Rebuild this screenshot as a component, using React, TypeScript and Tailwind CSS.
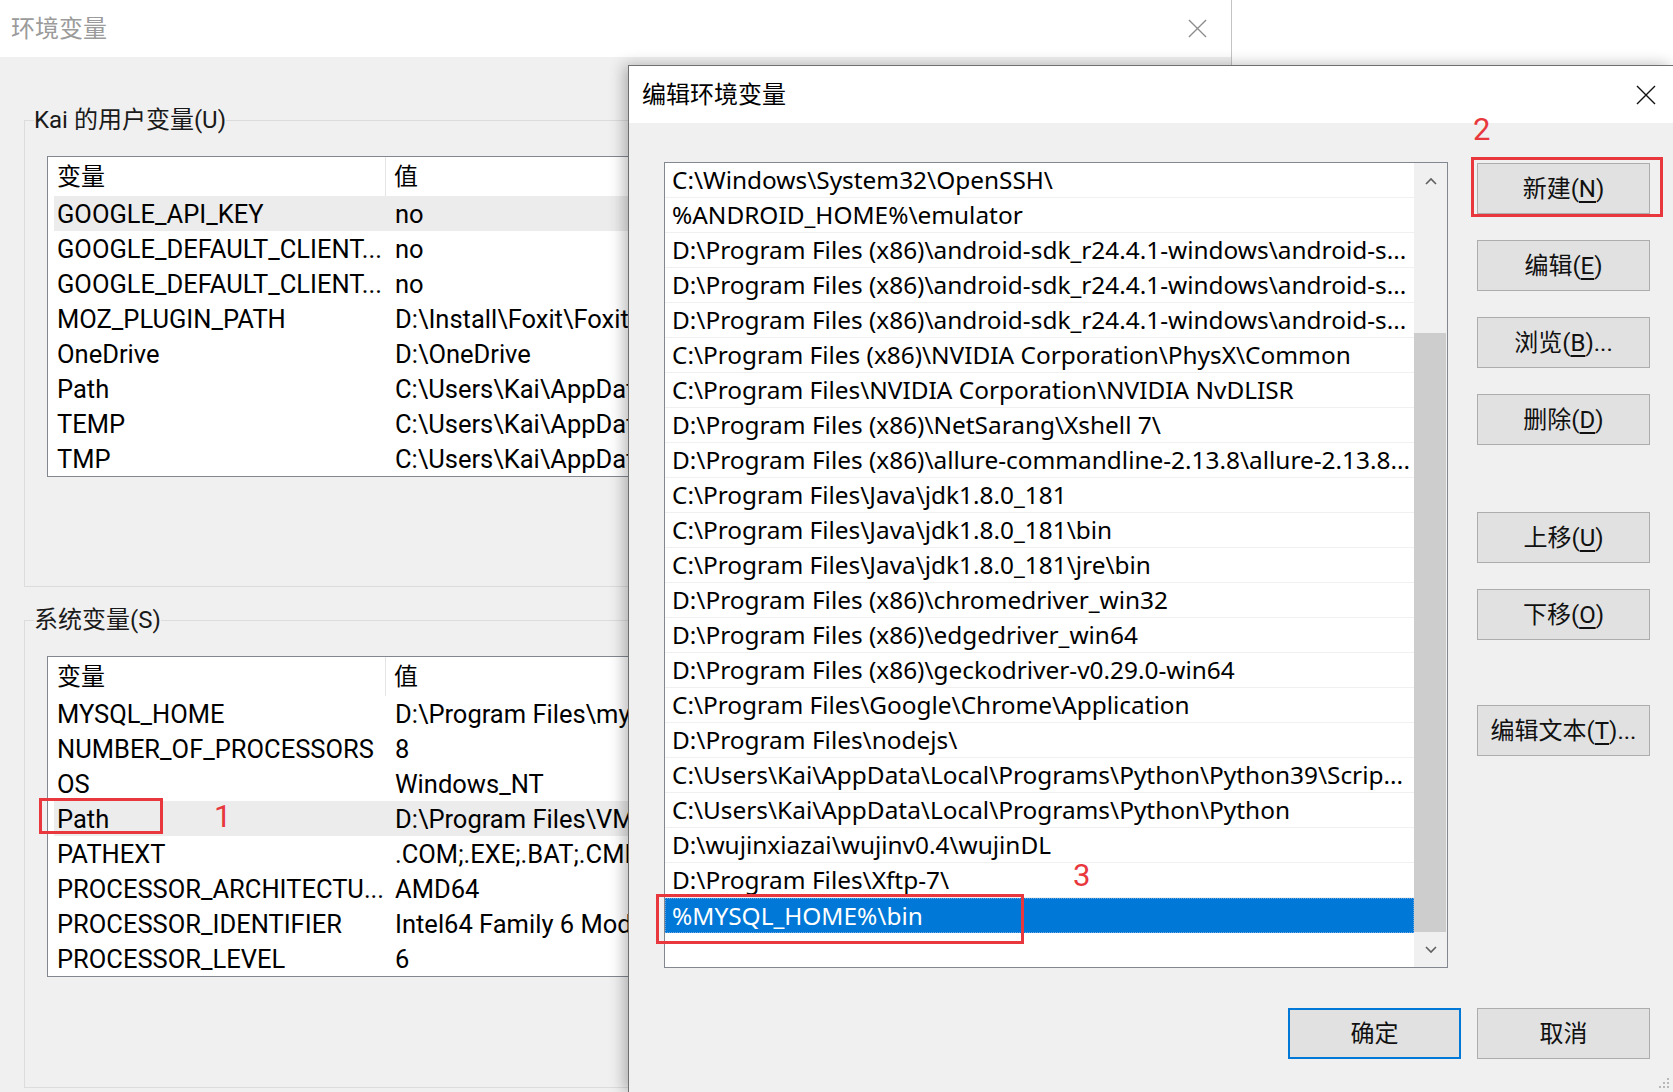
import React from 'react'

// 值列的右半部分被“编辑环境变量”对话框挡住
const userVars: [string, string][] = [
    ['GOOGLE_API_KEY', 'no'],
    ['GOOGLE_DEFAULT_CLIENT...', 'no'],
    ['GOOGLE_DEFAULT_CLIENT...', 'no'],
    ['MOZ_PLUGIN_PATH', 'D:\\Install\\Foxit\\Foxit R'],
    ['OneDrive', 'D:\\OneDrive'],
    ['Path', 'C:\\Users\\Kai\\AppData'],
    ['TEMP', 'C:\\Users\\Kai\\AppData'],
    ['TMP', 'C:\\Users\\Kai\\AppData'],
]

const sysVars: [string, string][] = [
    ['MYSQL_HOME', 'D:\\Program Files\\mys'],
    ['NUMBER_OF_PROCESSORS', '8'],
    ['OS', 'Windows_NT'],
    ['Path', 'D:\\Program Files\\VM'],
    ['PATHEXT', '.COM;.EXE;.BAT;.CMD'],
    ['PROCESSOR_ARCHITECTU...', 'AMD64'],
    ['PROCESSOR_IDENTIFIER', 'Intel64 Family 6 Mod'],
    ['PROCESSOR_LEVEL', '6'],
]

const paths = [
    'C:\\Windows\\System32\\OpenSSH\\',
    '%ANDROID_HOME%\\emulator',
    'D:\\Program Files (x86)\\android-sdk_r24.4.1-windows\\android-s...',
    'D:\\Program Files (x86)\\android-sdk_r24.4.1-windows\\android-s...',
    'D:\\Program Files (x86)\\android-sdk_r24.4.1-windows\\android-s...',
    'C:\\Program Files (x86)\\NVIDIA Corporation\\PhysX\\Common',
    'C:\\Program Files\\NVIDIA Corporation\\NVIDIA NvDLISR',
    'D:\\Program Files (x86)\\NetSarang\\Xshell 7\\',
    'D:\\Program Files (x86)\\allure-commandline-2.13.8\\allure-2.13.8...',
    'C:\\Program Files\\Java\\jdk1.8.0_181',
    'C:\\Program Files\\Java\\jdk1.8.0_181\\bin',
    'C:\\Program Files\\Java\\jdk1.8.0_181\\jre\\bin',
    'D:\\Program Files (x86)\\chromedriver_win32',
    'D:\\Program Files (x86)\\edgedriver_win64',
    'D:\\Program Files (x86)\\geckodriver-v0.29.0-win64',
    'C:\\Program Files\\Google\\Chrome\\Application',
    'D:\\Program Files\\nodejs\\',
    'C:\\Users\\Kai\\AppData\\Local\\Programs\\Python\\Python39\\Scrip...',
    'C:\\Users\\Kai\\AppData\\Local\\Programs\\Python\\Python',
    'D:\\wujinxiazai\\wujinv0.4\\wujinDL',
    'D:\\Program Files\\Xftp-7\\',
    '%MYSQL_HOME%\\bin',
]

function CloseIcon({ className }: { className: string }) {
    return (
        <svg viewBox="0 0 20 20" className={className} fill="none" stroke="currentColor" strokeWidth="1.4">
            <path d="M1 1 L19 19 M19 1 L1 19" />
        </svg>
    )
}

function VarTable({ rows, selected }: { rows: [string, string][]; selected: number }) {
    return (
        <div className="w-[1140px] bg-white border border-[#828790]">
            <div className="flex h-[39px] text-[24px] leading-[30px]">
                <div className="w-[338px] pl-[9px] flex items-center border-r border-[#e5e5e5]">变量</div>
                <div className="pl-[8px] flex items-center">值</div>
            </div>
            {rows.map(([name, value], i) => (
                <div
                    key={i}
                    className={`ml-[6px] flex h-[35px] items-center text-[25.5px] leading-[30px] whitespace-nowrap ${i === selected ? 'bg-[#ececec]' : ''}`}
                >
                    <div className="w-[341px] pl-[3px] overflow-hidden">{name}</div>
                    <div className="w-[233px] overflow-hidden">{value}</div>
                </div>
            ))}
        </div>
    )
}

function Group({ label, rows, selected, extra }: { label: string; rows: [string, string][]; selected: number; extra: string }) {
    return (
        <fieldset className={`border border-[#dcdcdc] px-[22px] ${extra}`}>
            <legend className="ml-[-13px] text-[24px] leading-[30px] text-[#1a1a1a]">{label}</legend>
            <div className="mt-[21px]">
                <VarTable rows={rows} selected={selected} />
            </div>
        </fieldset>
    )
}

function Btn({ children, primary }: { children: React.ReactNode; primary?: boolean }) {
    return (
        <div
            className={`w-[173px] h-[51px] flex items-center justify-center bg-[#e1e1e1] text-[24px] leading-[30px] text-[#111] ${
                primary ? 'border-2 border-[#0078d7]' : 'border border-[#adadad]'
            }`}
        >
            {children}
        </div>
    )
}

function EnvWindow() {
    return (
        <div className="flex flex-col w-[1232px] h-full border-r border-[#c4c4c4]">
            <div className="h-[57px] shrink-0 bg-white flex items-center justify-between pl-[11px] pr-[24px]">
                <span className="text-[24px] leading-[30px] text-[#9b9b9b]">环境变量</span>
                <CloseIcon className="w-[19px] h-[19px] text-[#8c8c8c]" />
            </div>
            <div className="flex-1 bg-[#f0f0f0] pl-[24px] pr-[22px] pt-[48px]">
                <Group label="Kai 的用户变量(U)" rows={userVars} selected={0} extra="pb-[109px]" />
                <div className="mt-[18px]">
                    <Group label="系统变量(S)" rows={sysVars} selected={3} extra="pb-[110px]" />
                </div>
            </div>
        </div>
    )
}

function EditDialog() {
    return (
        <div className="absolute left-[628px] top-[65px] w-[1045px] h-[1027px] flex flex-col border-l border-t border-[#6f6f6f] shadow-[-4px_0_14px_rgba(0,0,0,0.28)]">
            <div className="h-[57px] shrink-0 bg-white flex items-center justify-between pl-[13px] pr-[17px]">
                <span className="text-[24px] leading-[30px]">编辑环境变量</span>
                <CloseIcon className="w-[20px] h-[20px] text-[#111]" />
            </div>
            <div className="flex-1 bg-[#f0f0f0] flex flex-col">
                <div className="flex pl-[35px] pt-[39px]">
                    {/* 路径列表 */}
                    <div className="relative w-[784px] h-[806px] bg-white border border-[#828790] flex">
                        <div className="flex-1 min-w-0 flex flex-col font-['Noto_Sans','Noto_Sans_CJK_SC',sans-serif] text-[24.4px] leading-[30px]">
                            {paths.map((p, i) =>
                                i === paths.length - 1 ? (
                                    <div key={i} className="h-[35px] flex items-center bg-[#0078d7] text-white pl-[6px] border border-dotted border-[#6aa6e6]">
                                        {p}
                                    </div>
                                ) : (
                                    <div key={i} className="h-[35px] flex items-center pl-[7px] border-b border-[#f0f0f0] whitespace-nowrap overflow-hidden">
                                        {p}
                                    </div>
                                )
                            )}
                        </div>
                        <div className="w-[33px] shrink-0 bg-[#f0f0f0] flex flex-col">
                            <div className="h-[35px] flex items-center justify-center">
                                <svg viewBox="0 0 12 8" className="w-[12px] h-[8px]" fill="none" stroke="#606060" strokeWidth="1.6">
                                    <path d="M1 7 L6 2 L11 7" />
                                </svg>
                            </div>
                            <div className="h-[135px]" />
                            <div className="h-[599px] mr-[1px] bg-[#cdcdcd]" />
                            <div className="flex-1 flex items-center justify-center">
                                <svg viewBox="0 0 12 8" className="w-[12px] h-[8px]" fill="none" stroke="#606060" strokeWidth="1.6">
                                    <path d="M1 1 L6 6 L11 1" />
                                </svg>
                            </div>
                        </div>
                        {/* 标注 3 */}
                        <div className="absolute left-[-9px] top-[731px] w-[368px] h-[50px] border-[3px] border-[#e8383d]" />
                        <span className="absolute left-[408px] top-[697px] text-[31px] leading-none text-[#e8383d]">3</span>
                    </div>

                    <div className="ml-[29px] flex flex-col">
                        <div className="relative mt-[1px]">
                            <Btn>新建(<span className="underline underline-offset-4">N</span>)</Btn>
                            <div className="absolute left-[-6px] top-[-6px] w-[192px] h-[60px] border-[3px] border-[#e8383d]" />
                            <span className="absolute left-[-4px] top-[-49px] text-[31px] leading-none text-[#e8383d]">2</span>
                        </div>
                        <div className="mt-[26px]">
                            <Btn>编辑(<span className="underline underline-offset-4">E</span>)</Btn>
                        </div>
                        <div className="mt-[26px]">
                            <Btn>浏览(<span className="underline underline-offset-4">B</span>)...</Btn>
                        </div>
                        <div className="mt-[26px]">
                            <Btn>删除(<span className="underline underline-offset-4">D</span>)</Btn>
                        </div>
                        <div className="mt-[67px]">
                            <Btn>上移(<span className="underline underline-offset-4">U</span>)</Btn>
                        </div>
                        <div className="mt-[26px]">
                            <Btn>下移(<span className="underline underline-offset-4">O</span>)</Btn>
                        </div>
                        <div className="mt-[65px]">
                            <Btn>编辑文本(<span className="underline underline-offset-4">T</span>)...</Btn>
                        </div>
                    </div>
                </div>
                <div className="flex justify-end gap-[16px] pr-[23px] mt-[40px]">
                    <Btn primary>确定</Btn>
                    <Btn>取消</Btn>
                </div>
            </div>
            {/* 右下角拖动柄 */}
            <svg viewBox="0 0 12 12" className="absolute right-[3px] bottom-[3px] w-[12px] h-[12px]" fill="#b8b8b8">
                <rect x="9" y="1" width="2" height="2" />
                <rect x="5" y="5" width="2" height="2" />
                <rect x="9" y="5" width="2" height="2" />
                <rect x="1" y="9" width="2" height="2" />
                <rect x="5" y="9" width="2" height="2" />
                <rect x="9" y="9" width="2" height="2" />
            </svg>
        </div>
    )
}

export default function App() {
    return (
        <div className="relative w-[1673px] h-[1092px] overflow-hidden bg-white text-black font-['Roboto','Noto_Sans_CJK_SC',sans-serif]">
            <EnvWindow />
            <EditDialog />
            {/* 标注 1 */}
            <div className="absolute left-[39px] top-[798px] w-[124px] h-[36px] border-[3px] border-[#e8383d]" />
            <span className="absolute left-[214px] top-[801px] text-[31px] leading-none text-[#e8383d]">1</span>
        </div>
    )
}
